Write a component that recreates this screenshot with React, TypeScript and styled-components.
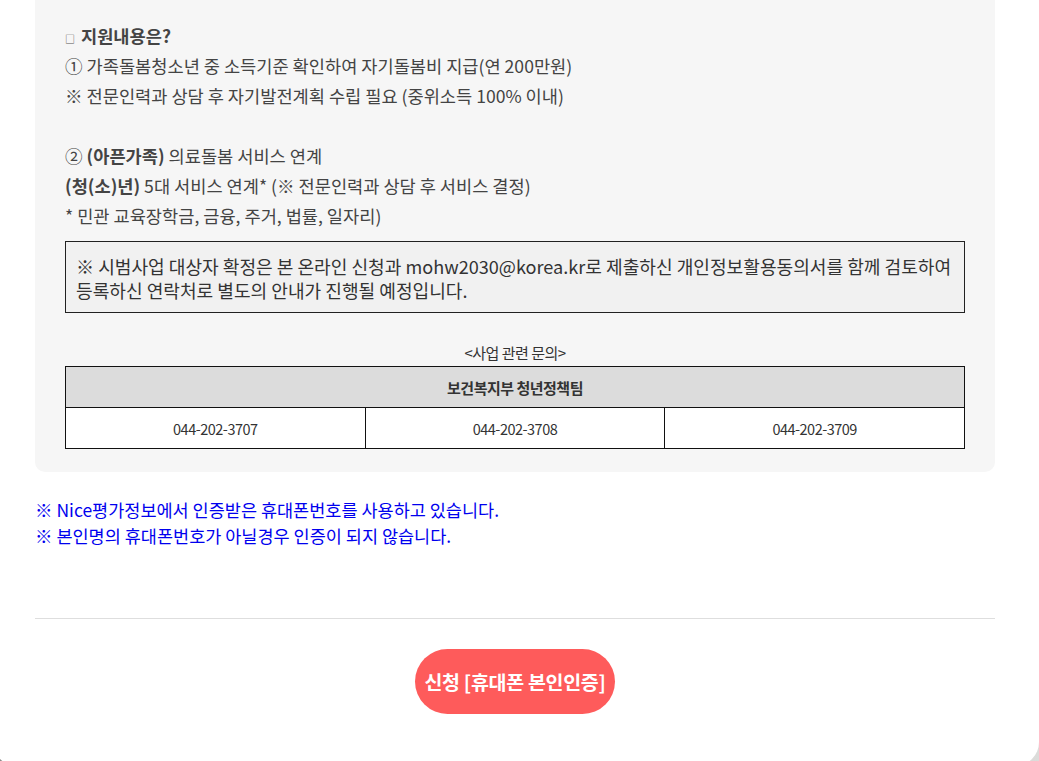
import React from "react";
import styled, { createGlobalStyle } from "styled-components";

const Global = createGlobalStyle`
  html, body {
    margin: 0;
    padding: 0;
    overflow: hidden;
    height: 761px;
  }
  body {
    background: linear-gradient(to right, #8c8a88, #dcdcda);
    font-family: "Noto Sans CJK KR", "Noto Sans", sans-serif;
  }
`;

const Card = styled.div`
  box-sizing: border-box;
  width: 1046px;
  margin-left: -7px;
  height: 766px;
  background: #fff;
  border-radius: 0 0 24px 24px;
  padding: 0 0 0 42px;
`;

const Inner = styled.div`
  width: 960px;
`;

const InfoBox = styled.section`
  background: #f6f6f6;
  border-radius: 0 0 10px 10px;
  padding: 21px 30px 23px 30px;
  color: #444;
  font-size: 17.6px;
`;

const Line = styled.p`
  margin: 0;
  line-height: 30px;
  height: 30px;
  white-space: nowrap;
`;

const Heading = styled(Line)`
  font-weight: 700;
`;

const Bullet = styled.span`
  font-size: 10px;
  font-weight: 400;
  margin-right: 6px;
  color: #555;
`;

const Notice = styled.div`
  margin-top: 10px;
  border: 1px solid #222;
  background: #f1f1f1;
  padding: 12px 10px 10px 10px;
  font-size: 18.1px;
  line-height: 24px;
  color: #333;
  white-space: nowrap;
`;

const Caption = styled.div`
  margin-top: 30px;
  text-align: center;
  font-size: 15px;
  line-height: 20px;
  height: 23px;
  color: #333;
  letter-spacing: -0.5px;
`;

const Table = styled.table`
  width: 100%;
  border-collapse: collapse;
  table-layout: fixed;
  font-size: 14.5px;
  color: #333;
  letter-spacing: -0.5px;
`;

const Th = styled.th`
  border: 1px solid #111;
  background: #dcdcdc;
  height: 40px;
  padding: 0;
  font-size: 15px;
  font-weight: 700;
  text-align: center;
`;

const Td = styled.td`
  border: 1px solid #111;
  background: #fff;
  height: 40px;
  padding: 0;
  text-align: center;
`;

const BlueNote = styled.div`
  margin-top: 25px;
  color: #0000ee;
  font-size: 17.5px;
  line-height: 26px;
`;

const Divider = styled.hr`
  margin: 69px 0 0 0;
  border: 0;
  border-top: 1px solid #dedede;
  height: 0;
`;

const ButtonRow = styled.div`
  display: flex;
  justify-content: center;
  padding-top: 30px;
`;

const ApplyButton = styled.button`
  width: 200px;
  height: 65px;
  border: 0;
  border-radius: 33px;
  background: #fe5b5b;
  color: #fff;
  font-family: "Noto Sans CJK KR", "Noto Sans", sans-serif;
  font-size: 19.5px;
  font-weight: 700;
  letter-spacing: -0.3px;
  padding: 0;
  cursor: pointer;
  white-space: nowrap;
`;

export default function App() {
  return (
    <>
      <Global />
      <Card>
        <Inner>
          <InfoBox>
            <Heading>
              <Bullet>□</Bullet>지원내용은?
            </Heading>
            <Line>① 가족돌봄청소년 중 소득기준 확인하여 자기돌봄비 지급(연 200만원)</Line>
            <Line>※ 전문인력과 상담 후 자기발전계획 수립 필요 (중위소득 100% 이내)</Line>
            <Line />
            <Line>
              ② <b>(아픈가족)</b> 의료돌봄 서비스 연계
            </Line>
            <Line>
              <b>(청(소)년)</b> 5대 서비스 연계* (※ 전문인력과 상담 후 서비스 결정)
            </Line>
            <Line>* 민관 교육장학금, 금융, 주거, 법률, 일자리)</Line>
            <Notice>
              ※ 시범사업 대상자 확정은 본 온라인 신청과 mohw2030@korea.kr로 제출하신 개인정보활용동의서를 함께 검토하여
              <br />
              등록하신 연락처로 별도의 안내가 진행될 예정입니다.
            </Notice>
            <Caption>&lt;사업 관련 문의&gt;</Caption>
            <Table>
              <thead>
                <tr>
                  <Th colSpan={3}>보건복지부 청년정책팀</Th>
                </tr>
              </thead>
              <tbody>
                <tr>
                  <Td>044-202-3707</Td>
                  <Td>044-202-3708</Td>
                  <Td>044-202-3709</Td>
                </tr>
              </tbody>
            </Table>
          </InfoBox>
          <BlueNote>
            ※ Nice평가정보에서 인증받은 휴대폰번호를 사용하고 있습니다.
            <br />
            ※ 본인명의 휴대폰번호가 아닐경우 인증이 되지 않습니다.
          </BlueNote>
          <Divider />
          <ButtonRow>
            <ApplyButton>신청 [휴대폰 본인인증]</ApplyButton>
          </ButtonRow>
        </Inner>
      </Card>
    </>
  );
}
